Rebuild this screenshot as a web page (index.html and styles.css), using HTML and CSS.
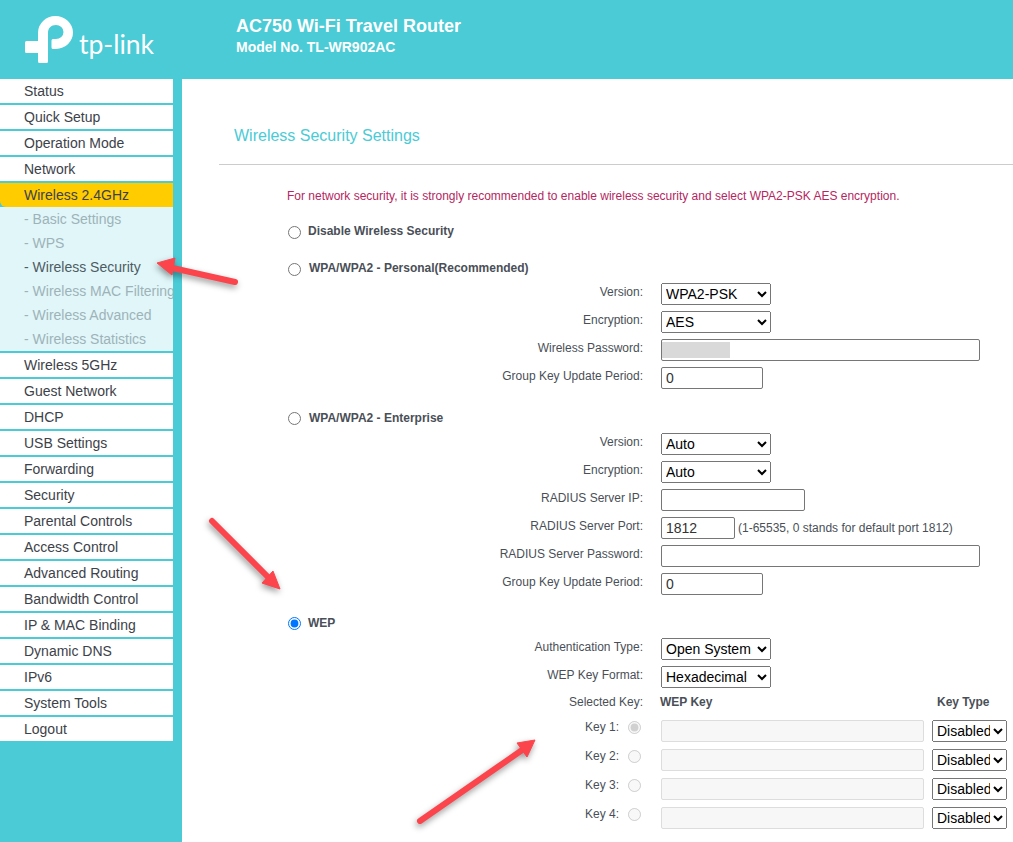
FILE: index.html
```html
<!DOCTYPE html>
<html lang="en">
<head>
    <meta charset="UTF-8">
    <title>TL-WR902AC</title>
    <link rel="stylesheet" href="styles.css">
</head>
<body>
    <div class="header">
        <div class="logo">
            <svg class="logo-mark" width="52" height="50" viewBox="0 0 52 50">
                <path fill="#fff" d="M13 16.500A17.500 16.500 0 1 1 31 33H28Q26.500 33 26.500 31.500V24.500Q26.500 23 28 23H31A7.500 7 0 0 0 31 9C26 9 23 12 23 17V45.500Q23 47 21.500 47H14.500Q13 47 13 45.500V37H1.500Q0 37 0 35.500V26.500Q0 25 1.500 25H13Z"/>
            </svg>
            <span class="logo-text">tp-link</span>
        </div>
        <div class="product">
            <div class="product-name">AC750 Wi-Fi Travel Router</div>
            <div class="product-model">Model No. TL-WR902AC</div>
        </div>
    </div>

    <div class="content">
        <div class="sidebar">
            <ul class="menu">
                <li>Status</li>
                <li>Quick Setup</li>
                <li>Operation Mode</li>
                <li>Network</li>
                <li class="open">Wireless 2.4GHz</li>
                <li class="sub">
                    <div>- Basic Settings</div>
                    <div>- WPS</div>
                    <div class="current">- Wireless Security</div>
                    <div>- Wireless MAC Filtering</div>
                    <div>- Wireless Advanced</div>
                    <div>- Wireless Statistics</div>
                </li>
                <li>Wireless 5GHz</li>
                <li>Guest Network</li>
                <li>DHCP</li>
                <li>USB Settings</li>
                <li>Forwarding</li>
                <li>Security</li>
                <li>Parental Controls</li>
                <li>Access Control</li>
                <li>Advanced Routing</li>
                <li>Bandwidth Control</li>
                <li>IP &amp; MAC Binding</li>
                <li>Dynamic DNS</li>
                <li>IPv6</li>
                <li>System Tools</li>
                <li>Logout</li>
            </ul>
        </div>

        <div class="main">
            <h1 class="title">Wireless Security Settings</h1>
            <p class="notice">For network security, it is strongly recommended to enable wireless security and select WPA2-PSK AES encryption.</p>

            <label class="choice first low"><input type="radio" name="mode">Disable Wireless Security</label>

            <label class="choice low"><input type="radio" name="mode"><span class="wpa-text">WPA/WPA2 - Personal(Recommended)</span></label>
            <div class="rows">
                <div class="row"><span class="lbl">Version:</span>
                    <select class="sel-wide"><option>WPA2-PSK</option></select></div>
                <div class="row"><span class="lbl">Encryption:</span>
                    <select class="sel-wide"><option>AES</option></select></div>
                <div class="row"><span class="lbl">Wireless Password:</span>
                    <span class="pass-wrap"><input type="text" class="in-long"><span class="blur"></span></span></div>
                <div class="row"><span class="lbl">Group Key Update Period:</span>
                    <input type="text" class="in-short" value="0"></div>
            </div>

            <label class="choice ent"><input type="radio" name="mode"><span class="wpa-text">WPA/WPA2 - Enterprise</span></label>
            <div class="rows">
                <div class="row"><span class="lbl">Version:</span>
                    <select class="sel-wide"><option>Auto</option></select></div>
                <div class="row"><span class="lbl">Encryption:</span>
                    <select class="sel-wide"><option>Auto</option></select></div>
                <div class="row"><span class="lbl">RADIUS Server IP:</span>
                    <input type="text" class="in-ip"></div>
                <div class="row"><span class="lbl">RADIUS Server Port:</span>
                    <input type="text" class="in-port" value="1812">
                    <span class="hint">(1-65535, 0 stands for default port 1812)</span></div>
                <div class="row"><span class="lbl">RADIUS Server Password:</span>
                    <input type="text" class="in-long"></div>
                <div class="row"><span class="lbl">Group Key Update Period:</span>
                    <input type="text" class="in-short" value="0"></div>
            </div>

            <label class="choice wep"><input type="radio" name="mode" checked>WEP</label>
            <div class="rows wep-rows">
                <div class="row"><span class="lbl">Authentication Type:</span>
                    <select class="sel-wide"><option>Open System</option></select></div>
                <div class="row"><span class="lbl">WEP Key Format:</span>
                    <select class="sel-wide"><option>Hexadecimal</option></select></div>
                <div class="row key-head"><span class="lbl">Selected Key:</span>
                    <b class="col-key">WEP Key</b><b>Key Type</b></div>
                <div class="row key"><span class="lbl">Key 1:</span>
                    <input type="radio" name="key" checked disabled>
                    <input type="text" class="in-key" disabled>
                    <select class="sel-key"><option>Disabled</option></select></div>
                <div class="row key"><span class="lbl">Key 2:</span>
                    <input type="radio" name="key" disabled>
                    <input type="text" class="in-key" disabled>
                    <select class="sel-key"><option>Disabled</option></select></div>
                <div class="row key"><span class="lbl">Key 3:</span>
                    <input type="radio" name="key" disabled>
                    <input type="text" class="in-key" disabled>
                    <select class="sel-key"><option>Disabled</option></select></div>
                <div class="row key"><span class="lbl">Key 4:</span>
                    <input type="radio" name="key" disabled>
                    <input type="text" class="in-key" disabled>
                    <select class="sel-key"><option>Disabled</option></select></div>
            </div>
        </div>
    </div>

    <!-- annotation arrows drawn over the page -->
    <svg class="arrows" width="1013" height="842" viewBox="0 0 1013 842">
        <g fill="#fb444b" stroke="#fb444b" stroke-linejoin="round">
            <path d="M235 282L168 267" fill="none" stroke-width="6" stroke-linecap="round"/>
            <path d="M157 263L175 258L172 275Z" stroke-width="1"/>
            <path d="M212 521L270 579" fill="none" stroke-width="6" stroke-linecap="round"/>
            <path d="M280 589L262 583L273 571Z" stroke-width="1"/>
            <path d="M420 821L525 748" fill="none" stroke-width="6" stroke-linecap="round"/>
            <path d="M535 740L517 743L527 757Z" stroke-width="1"/>
        </g>
    </svg>
</body>
</html>
```

FILE: styles.css
```css
html, body {
    margin: 0;
    height: 842px;
    overflow: hidden;
}
body {
    position: relative;
    background-color: #4acbd6;
    font-family: "Liberation Sans", Arial, sans-serif;
    font-size: 12px;
    color: #4a4f57;
}
.header {
    display: flex;
    height: 79px;
    background-color: #4acbd6;
    color: #fff;
}
.logo {
    display: flex;
    align-items: flex-start;
    width: 236px;
    padding: 16px 0 0 25px;
    box-sizing: border-box;
}
.logo-text {
    font-family: Lato, sans-serif;
    font-size: 26.5px;
    line-height: 30px;
    margin: 13px 0 0 2px;
}
.product {
    padding-top: 16px;
    font-weight: bold;
}
.product-name {
    font-size: 18px;
    line-height: 21px;
}
.product-model {
    font-size: 14px;
    line-height: 20px;
}
.content {
    display: flex;
    height: 763px;
}
.sidebar {
    width: 182px;
    flex-shrink: 0;
}
.menu {
    list-style: none;
    margin: 0;
    padding: 0;
    width: 173px;
    font-size: 14px;
    color: #3d4249;
}
.menu li {
    height: 24px;
    line-height: 24px;
    margin-bottom: 2px;
    padding-left: 24px;
    background-color: #fff;
    white-space: nowrap;
    overflow: hidden;
}
.menu li.open {
    background-color: #fc0;
    border-bottom-left-radius: 6px;
    margin-bottom: 0;
}
.menu li.sub {
    height: auto;
    background-color: #e1f6f9;
    color: #9db3b8;
}
.sub div {
    height: 24px;
    line-height: 24px;
}
.sub .current {
    color: #4d5c63;
}
.main {
    flex: 1;
    background-color: #fff;
}
.title {
    margin: 0 0 0 37px;
    padding: 47px 0 18px 15px;
    border-bottom: 1px solid #ccc;
    font-size: 16px;
    font-weight: normal;
    line-height: 20px;
    color: #4acbd6;
}
.notice {
    margin: 23px 0 0 105px;
    line-height: 16px;
    color: #b5265f;
}
.choice {
    display: flex;
    align-items: center;
    height: 20px;
    margin: 17px 0 0 106px;
    font-weight: bold;
}
.choice.ent {
    margin-top: 16px;
}
.choice.wep {
    margin-top: 15px;
}
.choice input {
    margin: 0 7px 0 0;
}
.choice.low input {
    margin-top: 2px;
}
.wpa-text {
    margin-left: 1px;
}
.rows {
    margin-top: 2px;
}
.row {
    display: flex;
    align-items: center;
    height: 28px;
}
.lbl {
    width: 461px;
    margin-right: 18px;
    padding-bottom: 4px;
    text-align: right;
    flex-shrink: 0;
}
select, .row input[type="text"] {
    box-sizing: border-box;
    height: 22px;
    margin: 0;
    font-family: "Liberation Sans", Arial, sans-serif;
    font-size: 14px;
}
.row input[type="text"] {
    border: 1px solid #767676;
    border-radius: 2px;
    padding: 1px 4px;
    color: #333;
}
.sel-wide { width: 110px; }
.in-long { width: 319px; }
.in-short { width: 102px; }
.in-ip { width: 144px; }
.in-port { width: 74px; }
.hint { margin-left: 3px; }
.pass-wrap {
    position: relative;
    display: flex;
}
.blur {
    position: absolute;
    left: 1px;
    top: 3px;
    width: 68px;
    height: 16px;
    background-color: #d9d9d9;
}
.key-head {
    height: 25px;
}
.key-head b {
    padding-bottom: 4px;
}
.col-key {
    width: 277px;
    margin-left: -1px;
}
.row.key {
    height: 29px;
}
.key .lbl {
    width: 437px;
    margin-right: 9px;
    padding-bottom: 7px;
}
.key input[type="radio"] {
    margin: 0 20px 6px 0;
}
.row.key input[type="text"] {
    width: 263px;
    margin-right: 8px;
    border-color: #ddd;
    background-color: #f7f7f7;
}
.sel-key { width: 75px; }
.arrows {
    position: absolute;
    left: 0;
    top: 0;
    pointer-events: none;
    filter: drop-shadow(-1px 3px 3px rgba(0, 0, 0, 0.4));
}
```
